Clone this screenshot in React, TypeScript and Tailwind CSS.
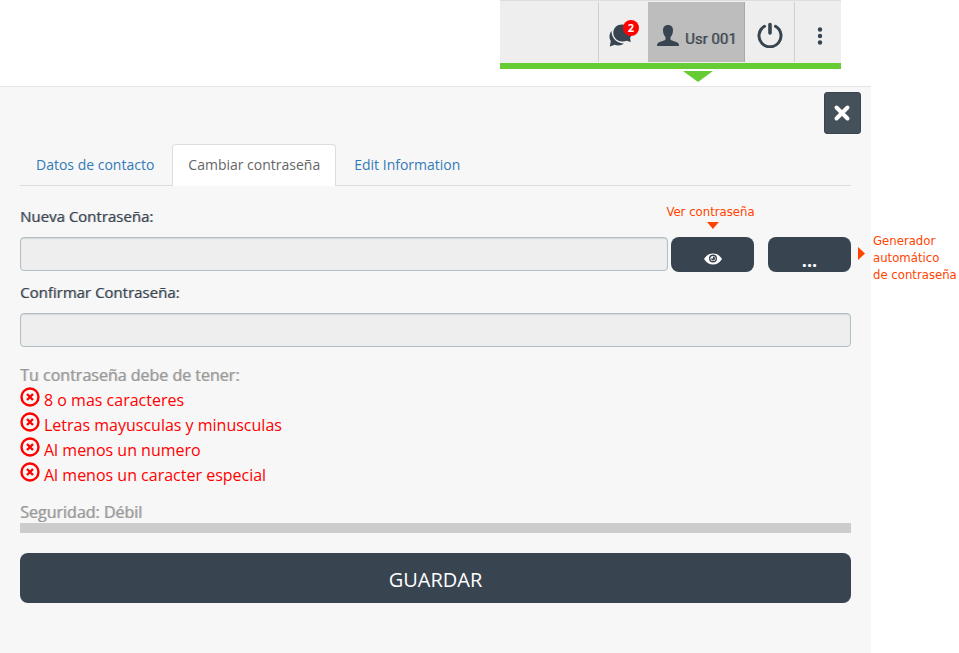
import React, { useState } from 'react';

const TABS = ['Datos de contacto', 'Cambiar contraseña', 'Edit Information'];

const RULES = [
  '8 o mas caracteres',
  'Letras mayusculas y minusculas',
  'Al menos un numero',
  'Al menos un caracter especial',
];

const ChatIcon = () => (
  <svg width="26" height="26" viewBox="0 0 26 26" fill="#38444f" aria-hidden="true">
    <path d="M3.500 10C1.200 12.500 .8 17 2.800 20L1.800 25.500L6.800 23.800C10 25 13.500 24.500 16 22.500C9 22.500 3.500 17.500 3.500 10Z" />
    <path d="M14 3.500C9 3.500 5.300 7 5.300 11.800S9.300 20.500 14 20.500C16 20.500 17.500 20.200 18.500 19.800L22.800 21L22 17C23.500 15 23.800 13 23.800 11.500C23.800 6.500 19 3.500 14 3.500Z" />
  </svg>
);

const UserIcon = () => (
  <svg width="22" height="22" viewBox="0 0 22 22" fill="#38444f" aria-hidden="true">
    <path d="M11 0C7.500 0 6 2.300 6 5.500C6 8 7 10.500 8.500 12V14.500C7.500 16 2.500 16.500 1 18C0 19 0 20.500 0 21H22C22 20.500 22 19 21 18C19.500 16.500 14.500 16 13.500 14.500V12C15 10.500 16 8 16 5.500C16 2.300 14.500 0 11 0Z" />
  </svg>
);

const PowerIcon = () => (
  <svg width="26" height="26" viewBox="0 0 26 26" fill="none" stroke="#38444f" strokeLinecap="round" aria-hidden="true">
    <path d="M7.500 4.300A11 11 0 1 0 18.500 4.300" strokeWidth="3" />
    <path d="M13 2.500V11" strokeWidth="3.600" />
  </svg>
);

const MoreIcon = () => (
  <svg width="6" height="18" viewBox="0 0 6 18" fill="#38444f" aria-hidden="true">
    <circle cx="3" cy="2.500" r="2.200" />
    <circle cx="3" cy="9" r="2.200" />
    <circle cx="3" cy="15.500" r="2.200" />
  </svg>
);

const CloseIcon = () => (
  <svg width="18" height="18" viewBox="0 0 18 18" stroke="#fff" strokeWidth="4" strokeLinecap="round" aria-hidden="true">
    <path d="M3.500 3.500L14.500 14.500M14.500 3.500L3.500 14.500" />
  </svg>
);

const EyeIcon = () => (
  <svg width="18" height="12" viewBox="0 0 18 12" aria-hidden="true">
    <path d="M0 6C2.500 2 5.500 .5 9 .5S15.500 2 18 6C15.500 10 12.500 11.500 9 11.500S2.500 10 0 6Z" fill="#fff" />
    <circle cx="9" cy="5.500" r="4" fill="#38444f" />
    <circle cx="9" cy="5.500" r="2.600" fill="#fff" />
    <path d="M9 5.500V3.500A2 2 0 1 1 7 5.500Z" fill="#38444f" />
  </svg>
);

const ErrorIcon = () => (
  <svg width="20" height="20" viewBox="0 0 20 20" fill="none" stroke="#f00" aria-hidden="true">
    <circle cx="10" cy="10" r="8.500" strokeWidth="2.400" />
    <path d="M7 7L13 13M13 7L7 13" strokeWidth="2.400" />
  </svg>
);

const TopBar = () => (
  <header className="mr-[118px] flex flex-col items-end">
    <div className="relative flex h-[69px] w-[341px] border-t border-b-6 border-t-[#ddd] border-b-[#66cc33] bg-[#eee] pt-px pb-px">
      <div className="flex-1 border-r border-[#d0d0d0]" />
      <button type="button" aria-label="Mensajes" className="relative flex w-[49px] items-center justify-center pt-1 pr-1.5">
        <ChatIcon />
        <span className="absolute top-[18px] right-[9px] flex size-4 items-center justify-center rounded-full bg-[#f00] font-['Open_Sans',sans-serif] text-[11px] font-bold text-white">
          2
        </span>
      </button>
      <button type="button" className="flex w-[97px] items-end gap-1.5 border-r border-[#aaa] bg-[#bdbdbd] pb-[11px] pl-[9px] font-[Roboto,sans-serif] text-[15px] leading-6 whitespace-nowrap text-[#38444f] [text-shadow:1px_0_0_#38444f66]">
        <span className="pb-1"><UserIcon /></span>
        Usr 001
      </button>
      <button type="button" aria-label="Salir" className="flex w-[50px] items-center justify-center border-r border-[#d0d0d0] pt-1.5">
        <PowerIcon />
      </button>
      <button type="button" aria-label="Más opciones" className="flex w-[46px] items-center justify-center pt-2 pl-1">
        <MoreIcon />
      </button>
      <svg className="absolute top-[70px] left-[183px]" width="30" height="11" viewBox="0 0 30 11" aria-hidden="true">
        <path d="M0 0H30L15 11Z" fill="#66cc33" />
      </svg>
    </div>
  </header>
);

const App: React.FC = () => {
  const [activeTab, setActiveTab] = useState(TABS[1]);
  const [visible, setVisible] = useState(false);

  return (
    <div className="flex min-h-screen flex-col overflow-x-hidden bg-white font-['Open_Sans',sans-serif] text-[#38444f]">
      <TopBar />

      <main className="mt-[17px] mr-[88px] flex-1 border-t border-[#e5e5e5] bg-[#f7f7f7] pb-10">
        <div className="flex justify-end px-2.5 pt-[5px]">
          <button type="button" aria-label="Cerrar" className="flex h-[42px] w-[37px] items-center justify-center rounded-[3px] border border-[#38444f] bg-[#44515b] pr-0.5">
            <CloseIcon />
          </button>
        </div>

        <form className="px-5 pt-2.5" onSubmit={(e) => e.preventDefault()}>
          <div role="tablist" className="flex gap-0.5 border-b border-[#ddd] text-sm">
            {TABS.map((tab) => (
              <button
                key={tab}
                type="button"
                role="tab"
                aria-selected={tab === activeTab}
                onClick={() => setActiveTab(tab)}
                className={
                  tab === activeTab
                    ? '-mb-px h-[42px] rounded-t border border-b-0 border-[#ddd] bg-white px-[15px] pb-0.5 text-[#666]'
                    : 'h-[41px] px-4 text-[#337ab7]'
                }
              >
                {tab}
              </button>
            ))}
          </div>

          <label htmlFor="nueva" className="mt-[19px] block text-[15px] leading-[22px] [text-shadow:1px_0_0_#38444f66]">Nueva Contraseña:</label>
          <div className="mt-2.5 flex">
            <input
              id="nueva"
              type={visible ? 'text' : 'password'}
              className="h-[34px] min-w-0 flex-1 rounded border border-[#b0bec5] bg-[#eee] px-3 text-sm shadow-[inset_0_1px_1px_rgba(0,0,0,0.1)] outline-none"
            />
            <div className="relative ml-[3px]">
              <button
                type="button"
                aria-label="Ver contraseña"
                onClick={() => setVisible(!visible)}
                className="flex h-[35px] w-[83px] items-end justify-center rounded-lg bg-[#38444f] pb-[7px]"
              >
                <EyeIcon />
              </button>
              <div className="absolute bottom-full left-1/2 flex -translate-x-1/2 flex-col items-center pb-2 font-['DejaVu_Sans_Condensed','DejaVu_Sans',sans-serif] text-[13px] leading-[17px] whitespace-nowrap text-[#ff4400]">
                <span className="pr-1">Ver contraseña</span>
                <svg className="mt-0.5" width="12" height="7" viewBox="0 0 12 7" aria-hidden="true">
                  <path d="M0 0H12L6 7Z" fill="#ff4400" />
                </svg>
              </div>
            </div>
            <div className="relative ml-3.5">
              <button type="button" aria-label="Generar contraseña" className="flex h-[35px] w-[83px] items-end justify-center rounded-lg bg-[#38444f] text-lg leading-6 font-bold text-white">
                ...
              </button>
              <div className="absolute top-[-5px] left-full flex items-center gap-2 pl-[7px] font-['DejaVu_Sans_Condensed','DejaVu_Sans',sans-serif] text-[13px] leading-[17px] whitespace-nowrap text-[#ff4400]">
                <svg className="mb-2" width="7" height="13" viewBox="0 0 7 13" aria-hidden="true">
                  <path d="M0 0V13L7 6.500Z" fill="#ff4400" />
                </svg>
                <span>Generador<br />automático<br />de contraseña</span>
              </div>
            </div>
          </div>

          <label htmlFor="confirmar" className="mt-[9px] block text-[15px] leading-[22px] [text-shadow:1px_0_0_#38444f66]">Confirmar Contraseña:</label>
          <input
            id="confirmar"
            type="password"
            className="mt-2.5 block h-[34px] w-full rounded border border-[#b0bec5] bg-[#eee] px-3 text-sm shadow-[inset_0_1px_1px_rgba(0,0,0,0.1)] outline-none"
          />

          <p className="mt-4 text-base leading-6 text-[#999] [text-shadow:1px_0_0_#99999988]">Tu contraseña debe de tener:</p>
          <ul className="text-base leading-[25px] text-[#f00]">
            {RULES.map((rule) => (
              <li key={rule} className="flex h-[25px] gap-1">
                <ErrorIcon />
                <span className="pt-px">{rule}</span>
              </li>
            ))}
          </ul>

          <p className="mt-[13px] h-[23px] text-base leading-6 text-[#999] [text-shadow:1px_0_0_#99999988]">Seguridad: Débil</p>
          <div className="h-2.5 bg-[#ccc]" />

          <button type="submit" className="mt-5 h-[50px] w-full rounded-lg bg-[#38444f] pt-1 text-xl text-white">
            GUARDAR
          </button>
        </form>
      </main>
    </div>
  );
};

export default App;
